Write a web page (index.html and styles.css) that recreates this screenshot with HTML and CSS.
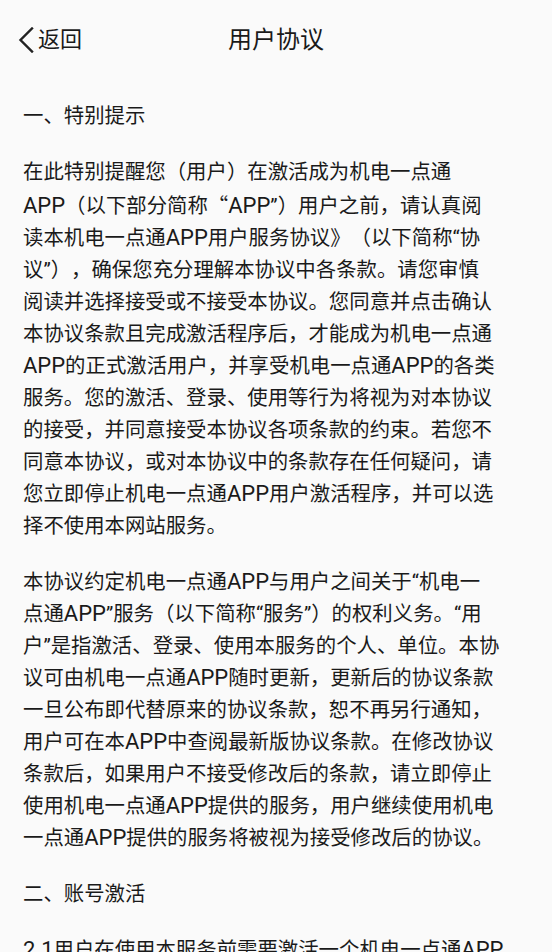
FILE: index.html
```html
<!DOCTYPE html>
<html lang="zh-CN">
<head>
<meta charset="utf-8">
<title>用户协议</title>
<link rel="stylesheet" href="styles.css">
</head>
<body>
<header class="topbar">
  <a class="back" href="#">
    <svg class="back-icon" width="16" height="26" viewBox="0 0 16 26"><polyline points="14,1.5 2.5,13 14,24.5" fill="none" stroke="#222" stroke-width="2.4" stroke-linecap="square"/></svg>
    <span class="back-text">返回</span>
  </a>
  <h1 class="title">用户协议</h1>
</header>
<main class="content">
  <h2 class="section">一、特别提示</h2>
  <p class="para">在此特别提醒您（用户）在激活成为机电一点通<br><span class="lat">APP</span>（以下部分简称<span class="cjk">“</span><span class="lat">APP</span>”）用户之前，请认真阅<br>读本机电一点通<span class="lat">APP</span>用户服务协议》（以下简称“协<br>议”），确保您充分理解本协议中各条款。请您审慎<br>阅读并选择接受或不接受本协议。您同意并点击确认<br>本协议条款且完成激活程序后，才能成为机电一点通<br><span class="lat">APP</span>的正式激活用户，并享受机电一点通<span class="lat">APP</span>的各类<br>服务。您的激活、登录、使用等行为将视为对本协议<br>的接受，并同意接受本协议各项条款的约束。若您不<br>同意本协议，或对本协议中的条款存在任何疑问，请<br>您立即停止机电一点通<span class="lat">APP</span>用户激活程序，并可以选<br>择不使用本网站服务。</p>
  <p class="para">本协议约定机电一点通<span class="lat">APP</span>与用户之间关于“机电一<br>点通<span class="lat">APP</span>”服务（以下简称“服务”）的权利义务。“用<br>户”是指激活、登录、使用本服务的个人、单位。本协<br>议可由机电一点通<span class="lat">APP</span>随时更新，更新后的协议条款<br>一旦公布即代替原来的协议条款，恕不再另行通知，<br>用户可在本<span class="lat">APP</span>中查阅最新版协议条款。在修改协议<br>条款后，如果用户不接受修改后的条款，请立即停止<br>使用机电一点通<span class="lat">APP</span>提供的服务，用户继续使用机电<br>一点通<span class="lat">APP</span>提供的服务将被视为接受修改后的协议。</p>
  <h2 class="section">二、账号激活</h2>
  <p class="para"><span class="lat">2.1</span>用户在使用本服务前需要激活一个机电一点通<span class="lat">APP</span><br>账号。</p>
</main>
</body>
</html>
```
FILE: styles.css
```css
html, body {
  margin: 0;
  padding: 0;
  background: #fafafa;
}
body {
  font-family: Roboto, "Noto Sans CJK SC", sans-serif;
  color: #1a1a1a;
  width: 552px;
  height: 952px;
  overflow: hidden;
  text-spacing-trim: space-all;
}
.topbar {
  position: relative;
  height: 80px;
  display: flex;
  align-items: center;
  justify-content: center;
}
.back {
  position: absolute;
  left: 18px;
  top: 0;
  height: 80px;
  display: flex;
  align-items: center;
  gap: 4px;
  color: #1a1a1a;
  text-decoration: none;
}
.back-icon {
  display: block;
}
.back-text {
  font-size: 22px;
  line-height: 1;
}
.title {
  margin: 0;
  font-size: 24px;
  font-weight: 400;
  line-height: 1;
}
.content {
  padding: 20px 23px 0;
}
.section {
  margin: 0 0 24px;
  font-size: 20.4px;
  font-weight: 400;
  line-height: 32px;
}
.para {
  margin: 0 0 24px;
  font-size: 20.4px;
  line-height: 32px;
  white-space: nowrap;
}
.lat {
  font-size: 22px;
  line-height: 1;
}
.cjk {
  font-family: "Noto Sans CJK SC", sans-serif;
}
```
